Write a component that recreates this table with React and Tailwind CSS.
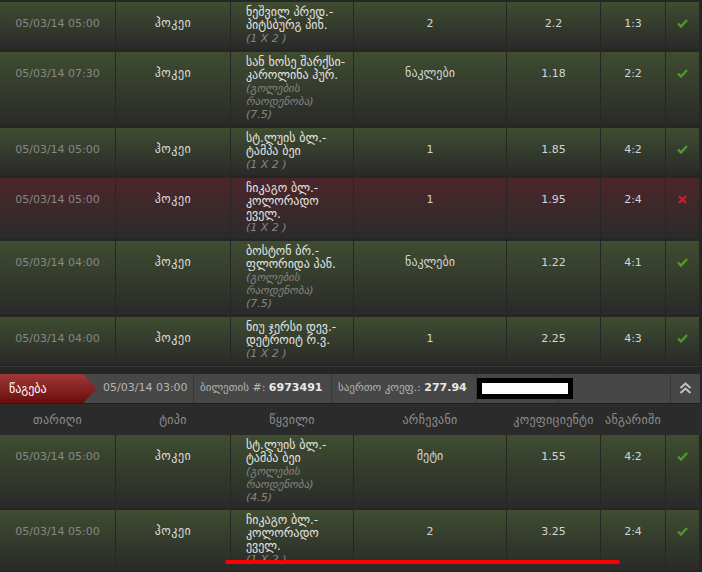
const rows = [
  { date: '05/03/14 05:00', match: ['ნეშვილ პრედ.-', 'პიტსბურგ პინ.'], note: ['(1 X 2 )'], pick: '2', odd: '2.2', score: '1:3', won: true },
  { date: '05/03/14 07:30', match: ['სან ხოსე შარქსი-', 'კაროლინა ჰურ.'], note: ['(გოლების', 'რაოდენობა)', '(7.5)'], pick: 'ნაკლები', odd: '1.18', score: '2:2', won: true },
  { date: '05/03/14 05:00', match: ['სტ.ლუის ბლ.-', 'ტამპა ბეი'], note: ['(1 X 2 )'], pick: '1', odd: '1.85', score: '4:2', won: true },
  { date: '05/03/14 05:00', match: ['ჩიკაგო ბლ.-', 'კოლორადო', 'ეველ.'], note: ['(1 X 2 )'], pick: '1', odd: '1.95', score: '2:4', won: false },
  { date: '05/03/14 04:00', match: ['ბოსტონ ბრ.-', 'ფლორიდა პან.'], note: ['(გოლების', 'რაოდენობა)', '(7.5)'], pick: 'ნაკლები', odd: '1.22', score: '4:1', won: true },
  { date: '05/03/14 04:00', match: ['ნიუ ჯერსი დევ.-', 'დეტროიტ რ.ვ.'], note: ['(1 X 2 )'], pick: '1', odd: '2.25', score: '4:3', won: true },
];

const lost = [
  { date: '05/03/14 05:00', match: ['სტ.ლუის ბლ.-', 'ტამპა ბეი'], note: ['(გოლების', 'რაოდენობა)', '(4.5)'], pick: 'მეტი', odd: '1.55', score: '4:2', won: true },
  { date: '05/03/14 05:00', match: ['ჩიკაგო ბლ.-', 'კოლორადო', 'ეველ.'], note: ['(1 X 2 )'], pick: '2', odd: '3.25', score: '2:4', won: true },
];

const cols = 'grid grid-cols-[115px_114px_122px_152px_93px_64px_33px] gap-x-px';

function Check() {
  return (
    <svg width="11" height="9" viewBox="0 0 11 9">
      <path d="M1 4.5 L4 7.5 L10 1" fill="none" stroke="#4f9a2b" strokeWidth="2.4" />
    </svg>
  );
}

function Cross() {
  return (
    <svg width="9" height="9" viewBox="0 0 9 9">
      <path d="M1 1 L8 8 M8 1 L1 8" fill="none" stroke="#b8272a" strokeWidth="2.4" />
    </svg>
  );
}

function Row({ r }) {
  const bg = r.won
    ? 'bg-gradient-to-b from-[#3f4d30] to-[#2a2a29]'
    : 'bg-gradient-to-b from-[#4b262a] to-[#2c2a2a]';
  const cell = `${bg} pt-[15px] leading-[13px] text-center`;
  return (
    <div className={cols}>
      <div className={`${cell} text-[#878787]`}>{r.date}</div>
      <div className={`${cell} text-[12px] tracking-[0.5px] text-[#dcdcdc]`}>ჰოკეი</div>
      <div className={`${bg} pl-[15px] py-[4px] leading-[13px] whitespace-nowrap`}>
        {r.match.map((m) => (
          <div key={m} className="text-[12px] text-[#e4e4e4]">{m}</div>
        ))}
        {r.note.map((n) => (
          <div key={n} className="italic text-[#858585]">{n}</div>
        ))}
      </div>
      <div className={`${cell} text-[#d4d4d4] ${/\d/.test(r.pick) ? '' : 'text-[12px]'}`}>{r.pick}</div>
      <div className={`${cell} text-[#d4d4d4]`}>{r.odd}</div>
      <div className={`${cell} text-[#d4d4d4]`}>{r.score}</div>
      <div className={`${bg} pt-[17px] flex justify-center items-start`}>
        {r.won ? <Check /> : <Cross />}
      </div>
    </div>
  );
}

export default function App() {
  return (
    <div className="relative w-[702px] h-[572px] overflow-hidden bg-[#262626] font-['DejaVu_Sans',sans-serif] text-[11px]">
      <div className="flex flex-col gap-y-[3px] pt-[2px]">
        {rows.map((r, i) => (
          <Row key={i} r={r} />
        ))}
      </div>
      <div className="mt-[2px] h-px w-[700px] bg-[#383838]" />
      <div className="h-[7px]" />

      <div className="relative flex h-[29px] w-[700px] items-center bg-[#474747] text-[11px]">
        <div className="h-full w-[97px] flex items-center pl-[9px] text-[12px] text-white bg-gradient-to-b from-[#a03838] to-[#6a0c0c] [clip-path:polygon(0_0,83px_0,97px_50%,83px_100%,0_100%)]">
          წაგება
        </div>
        <div className="h-full w-[97px] flex items-center pl-[6px] text-[#b4b4b4] border-r border-[#393939]">
          05/03/14 03:00
        </div>
        <div className="h-full w-[138px] flex items-center pl-[6px] text-[#b4b4b4] border-r border-[#393939] whitespace-nowrap">
          ბილეთის #:&nbsp;<span className="font-bold text-[#e8e8e8]">6973491</span>
        </div>
        <div className="h-full w-[145px] flex items-center pl-[6px] text-[#b4b4b4] border-r border-[#393939] whitespace-nowrap">
          საერთო კოეფ.:&nbsp;<span className="font-bold text-[#e8e8e8]">277.94</span>
        </div>
        <div className="h-full w-[82px] border-r border-[#393939]" />
        <div className="h-full w-[112px] border-r border-[#393939]" />
        <div className="h-full flex-1 flex items-center justify-center">
          <svg width="13" height="13" viewBox="0 0 13 13">
            <path d="M1.5 6 L6.5 1.5 L11.5 6 M1.5 11 L6.5 6.5 L11.5 11" fill="none" stroke="#c4c4c4" strokeWidth="2" />
          </svg>
        </div>
        <div className="absolute left-[477px] top-[4px] h-[21px] w-[96px] border-[5px] border-black bg-white" />
      </div>
      <div className="h-px w-[700px] bg-[#1f1f1f]" />

      <div className={`${cols} h-[31px] items-center bg-[#2b2b2b] text-center text-[12px] text-[#8e8e8e] tracking-[0.3px]`}>
        <div>თარიღი</div>
        <div>ტიპი</div>
        <div>წყვილი</div>
        <div>არჩევანი</div>
        <div>კოეფიციენტი</div>
        <div>ანგარიში</div>
        <div />
      </div>

      <div className="flex flex-col gap-y-[2px]">
        {lost.map((r, i) => (
          <Row key={i} r={r} />
        ))}
      </div>

      <div className="absolute left-[225px] top-[560px] h-[4px] w-[395px] rounded-full bg-[#ff0000]" />
    </div>
  );
}
